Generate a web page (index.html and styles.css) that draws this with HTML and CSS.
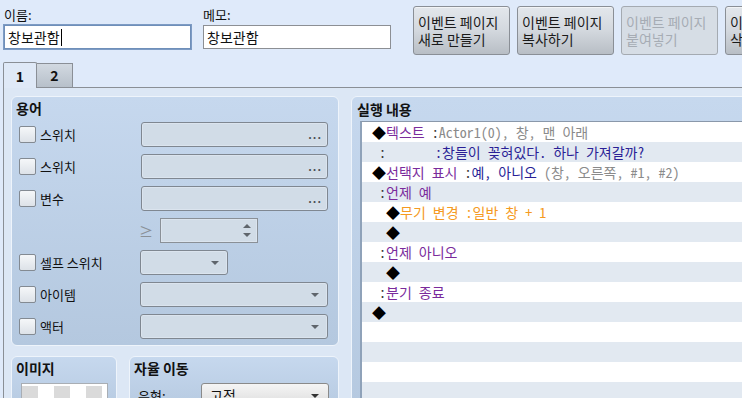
FILE: index.html
```html
<!DOCTYPE html>
<html>
<head>
    <title>이벤트 편집</title>
    <link rel="stylesheet" href="styles.css">
</head>
<body>
    <div class="top">
        <div class="field name-field">
            <label>이름:</label>
            <div class="textbox focused">창보관함<span class="caret"></span></div>
        </div>
        <div class="field memo-field">
            <label>메모:</label>
            <div class="textbox">창보관함</div>
        </div>
        <div class="page-buttons">
            <button><span>이벤트 페이지</span><span>새로 만들기</span></button>
            <button><span>이벤트 페이지</span><span>복사하기</span></button>
            <button disabled><span>이벤트 페이지</span><span>붙여넣기</span></button>
            <button><span>이벤트 페이지</span><span>삭제하기</span></button>
        </div>
    </div>

    <div class="tabs">
        <div class="tab active">1</div>
        <div class="tab">2</div>
    </div>

    <div class="tab-panel">
        <div class="left-col">
            <div class="group conditions">
                <div class="group-title">용어</div>
                <div class="cond-grid">
                    <label class="check"><span class="box"></span>스위치</label>
                    <div class="picker"><span class="dots">...</span></div>

                    <label class="check"><span class="box"></span>스위치</label>
                    <div class="picker"><span class="dots">...</span></div>

                    <label class="check"><span class="box"></span>변수</label>
                    <div class="picker"><span class="dots">...</span></div>

                    <div></div>
                    <div class="value-row">
                        <span class="gte">≥</span>
                        <div class="spinner"><span class="up"></span><span class="down"></span></div>
                    </div>

                    <label class="check"><span class="box"></span>셀프 스위치</label>
                    <div class="combo small"><span class="arrow"></span></div>

                    <label class="check"><span class="box"></span>아이템</label>
                    <div class="combo"><span class="arrow"></span></div>

                    <label class="check"><span class="box"></span>액터</label>
                    <div class="combo"><span class="arrow"></span></div>
                </div>
            </div>

            <div class="bottom-groups">
                <div class="group image-group">
                    <div class="group-title">이미지</div>
                    <div class="preview"><div class="checker"></div></div>
                </div>
                <div class="group move-group">
                    <div class="group-title">자율 이동</div>
                    <div class="move-row">
                        <span class="move-label">유형:</span>
                        <div class="combo enabled">고정<span class="arrow"></span></div>
                    </div>
                </div>
            </div>
        </div>

        <div class="group exec">
            <div class="group-title">실행 내용</div>
            <div class="cmd-list">
                <div class="row"><span class="dia">◆</span><span class="purple">텍스트</span><span class="colon"> :</span><span class="grey">Actor1(0), 창, 맨 아래</span></div>
                <div class="row"><span class="colon"> :</span>       <span class="navy">:창들이 꽂혀있다. 하나 가져갈까?</span></div>
                <div class="row"><span class="dia">◆</span><span class="purple">선택지 표시</span><span class="colon"> :</span><span class="navy">예, 아니오</span><span class="grey"> (창, 오른쪽, #1, #2)</span></div>
                <div class="row"><span class="colon"> :</span><span class="purple">언제 예</span></div>
                <div class="row">  <span class="dia">◆</span><span class="orange">무기 변경 :일반 창 + 1</span></div>
                <div class="row">  <span class="dia">◆</span></div>
                <div class="row"><span class="colon"> :</span><span class="purple">언제 아니오</span></div>
                <div class="row">  <span class="dia">◆</span></div>
                <div class="row"><span class="colon"> :</span><span class="purple">분기 종료</span></div>
                <div class="row"><span class="dia">◆</span></div>
                <div class="row"></div>
                <div class="row"></div>
                <div class="row"></div>
                <div class="row"></div>
            </div>
        </div>
    </div>
</body>
</html>
```

FILE: styles.css
```css
body {
    margin: 0;
    width: 742px;
    height: 398px;
    overflow: hidden;
    background-color: #dfeafa;
    font-family: "Noto Sans CJK KR", "Noto Sans", sans-serif;
    color: #111;
}
.top {
    display: flex;
    align-items: flex-start;
    height: 56px;
    padding-top: 6px;
    box-sizing: border-box;
}
.field {
    display: flex;
    flex-direction: column;
    flex-shrink: 0;
    padding-top: 1px;
}
.field label {
    font-size: 13px;
    line-height: 16px;
    margin-bottom: 2px;
}
.name-field {
    margin-left: 4px;
    width: 187px;
}
.memo-field {
    margin-left: 12px;
    width: 188px;
}
.textbox {
    height: 24px;
    box-sizing: border-box;
    border: 1px solid #8c8f94;
    background-color: white;
    font-size: 14px;
    line-height: 22px;
    padding-left: 3px;
    white-space: nowrap;
}
.textbox.focused {
    border-color: #6f8fb9;
    box-shadow: 0 0 0 1px #7d9bc4;
}
.caret {
    display: inline-block;
    width: 1px;
    height: 17px;
    background-color: #000;
    vertical-align: -3px;
    margin-left: 1px;
}
.page-buttons {
    display: flex;
    gap: 7px;
    margin-left: 22px;
    flex-shrink: 0;
}
button {
    width: 97px;
    height: 49px;
    flex-shrink: 0;
    display: flex;
    flex-direction: column;
    justify-content: center;
    align-items: flex-start;
    padding: 0 0 0 4px;
    font-family: inherit;
    font-size: 14px;
    color: #1a1a1a;
    border: 1px solid #8a8f96;
    border-radius: 3px;
    background: linear-gradient(#e3e7ec, #d3d8de 50%, #b8bec5);
    box-shadow: inset 0 1px 0 #f2f4f6;
}
button span {
    display: block;
    height: 17px;
    line-height: 17px;
    white-space: nowrap;
}
button:disabled {
    color: #a6acb4;
    background: #d6dde5;
    border-color: #a4aab1;
    box-shadow: none;
}
.tabs {
    display: flex;
    align-items: flex-end;
    height: 25px;
    padding-left: 3px;
    margin-top: 6px;
}
.tab {
    width: 34px;
    height: 24px;
    box-sizing: border-box;
    border: 1px solid #8a8f96;
    border-bottom: none;
    text-align: center;
    font-size: 14px;
    line-height: 23px;
    font-weight: bold;
    background: linear-gradient(#d2d9e1, #b7c0ca);
}
.tab.active {
    height: 26px;
    margin-bottom: -1px;
    position: relative;
    background: #dfe9f7;
    border-radius: 2px 2px 0 0;
    line-height: 26px;
}
.tab + .tab {
    width: 36px;
    border-left: none;
}
.tab-panel {
    display: flex;
    gap: 12px;
    margin-left: 3px;
    border-top: 1px solid #8a8f96;
    border-left: 1px solid #8a8f96;
    background-color: #dce7f5;
    padding: 8px 0 0 7px;
    height: 320px;
}
.left-col {
    width: 328px;
    flex-shrink: 0;
    display: flex;
    flex-direction: column;
    gap: 10px;
}
.group {
    border: 1px solid #eef4fb;
    border-radius: 6px;
    background: linear-gradient(#c6d8ee, #b4c8df);
    box-sizing: border-box;
}
.group-title {
    font-size: 14px;
    font-weight: bold;
    line-height: 18px;
    padding: 2px 0 0 4px;
}
.conditions {
    height: 250px;
}
.cond-grid {
    display: grid;
    grid-template-columns: 121px 188px;
    grid-auto-rows: 25px;
    row-gap: 7px;
    margin: 5px 0 0 7px;
}
.check {
    display: flex;
    align-items: center;
    gap: 4px;
    font-size: 13px;
}
.box {
    width: 17px;
    height: 17px;
    box-sizing: border-box;
    border: 1px solid #838a92;
    border-radius: 2px;
    background: linear-gradient(#f5f7f9, #dde2e8);
}
.picker, .combo, .spinner {
    position: relative;
    box-sizing: border-box;
    height: 25px;
    border: 1px solid #7f8791;
    border-radius: 3px;
    background-color: #d1dce7;
    box-shadow: inset 0 0 0 1px #dbe4ee;
}
.picker {
    margin-left: 1px;
}
.dots {
    position: absolute;
    right: 5px;
    top: 1px;
    font-size: 11px;
    line-height: 20px;
    letter-spacing: 1px;
    color: #4a4f55;
    font-weight: bold;
}
.combo.small {
    width: 88px;
}
.arrow {
    position: absolute;
    right: 8px;
    top: 10px;
    border-left: 4px solid transparent;
    border-right: 4px solid transparent;
    border-top: 4px solid #5f656c;
}
.value-row {
    display: flex;
    align-items: center;
}
.gte {
    width: 20px;
    margin-left: -1px;
    margin-right: 1px;
    font-size: 14px;
    color: #8a9097;
}
.spinner {
    width: 98px;
    border-radius: 0;
    border-color: #8a9097;
}
.up, .down {
    position: absolute;
    right: 6px;
    border-left: 4px solid transparent;
    border-right: 4px solid transparent;
}
.up {
    top: 5px;
    border-bottom: 4px solid #5f656c;
}
.down {
    top: 14px;
    border-top: 4px solid #5f656c;
}
.bottom-groups {
    display: flex;
    gap: 12px;
}
.image-group {
    width: 106px;
    height: 60px;
}
.image-group .preview {
    margin: 6px 0 0 9px;
    width: 87px;
    height: 40px;
    box-sizing: border-box;
    border: 1px solid #a9aeb4;
    background-color: white;
    padding: 2px 0 0 0;
}
.checker {
    height: 100%;
    background-color: white;
    background-image: linear-gradient(90deg, #dadada 50%, transparent 50%);
    background-size: 32px 16px;
    background-position: 0 0;
}
.move-group {
    width: 210px;
    height: 60px;
}
.move-row {
    display: flex;
    align-items: flex-start;
    margin-top: 6px;
}
.move-label {
    font-size: 13px;
    margin: 3px 0 0 8px;
    width: 63px;
}
.combo.enabled {
    width: 128px;
    height: 24px;
    border-color: #8a8a8a;
    background: linear-gradient(#f5f5f5, #dcdcdc);
    box-shadow: none;
    font-size: 14px;
    line-height: 22px;
    padding-left: 8px;
}
.combo.enabled .arrow {
    border-top-color: #333;
    right: 9px;
}
.exec {
    width: 430px;
    flex-shrink: 0;
    height: 330px;
}
.exec .group-title {
    padding: 3px 0 0 5px;
}
.cmd-list {
    margin: 3px 0 0 8px;
    border-top: 1px solid #8a98aa;
    border-left: 2px solid #8fa2b9;
    background-color: white;
}
.row {
    height: 20px;
    line-height: 20px;
    padding-left: 10px;
    white-space: pre;
    font-family: "Noto Sans Mono CJK KR", "Noto Sans CJK KR", monospace;
    font-size: 14px;
    background-color: white;
}
.row:nth-child(even) {
    background-color: #e2e9f1;
}
.dia {
    color: #000;
}
.purple {
    color: #7a2b9c;
}
.navy {
    color: #2a1f96;
}
.grey {
    color: #8a8a8a;
}
.orange {
    color: #f59a22;
}
.colon {
    color: #333;
}
```
